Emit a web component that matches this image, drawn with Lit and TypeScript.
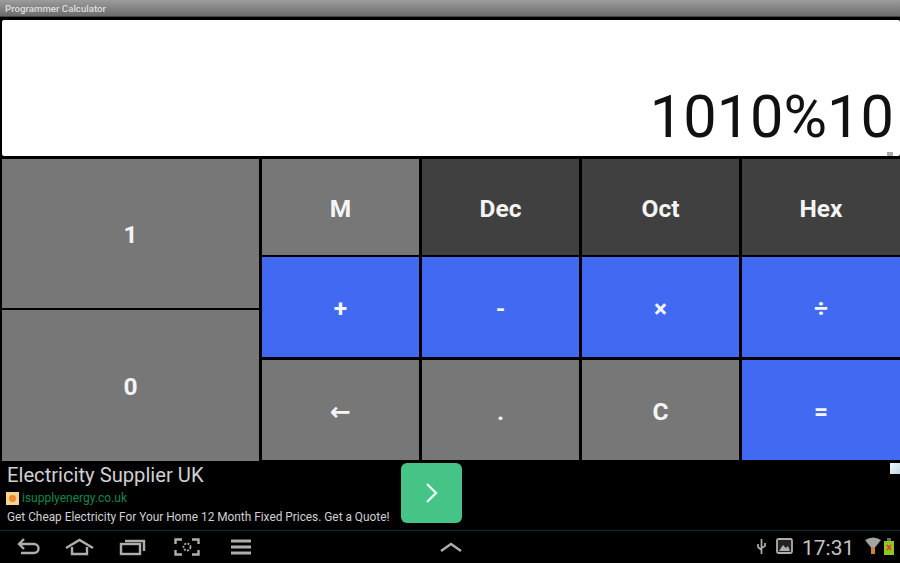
import { LitElement, html, css } from "lit";
import { customElement } from "lit/decorators.js";

const ICON = "fill:none;stroke:#aeaeae;stroke-width:2.4";

@customElement("app-root")
export class AppRoot extends LitElement {
  static styles = css`
    :host { display: block; width: 900px; height: 563px; background: #000; overflow: hidden; font-family: Roboto, "Liberation Sans", sans-serif; }
    .title { height: 17px; background: linear-gradient(#9c9c9c, #6c6c6c); color: #dedede; font-size: 9.7px; font-weight: 500; line-height: 18px; padding-left: 5px; box-sizing: border-box; border-bottom: 1px solid #444; }
    .disp { position: relative; margin: 3px 0 0 2px; height: 136px; background: #fff; border-radius: 2px; display: flex; align-items: flex-end; justify-content: flex-end; color: #111; font-size: 59.5px; line-height: 70px; padding: 0 6px 4px 0; box-sizing: border-box; }
    .grip { position: absolute; right: 7px; bottom: 0; width: 6px; height: 4px; background: #aaa; }
    .keys { display: grid; grid-template-columns: 257px 157px 157px 157px 158px; column-gap: 3px; margin: 3px 0 0 2px; height: 302px; }
    .left { display: grid; grid-template-rows: 148.5px 150.5px; row-gap: 2.5px; }
    .col { display: grid; grid-template-rows: 95.5px 100px 100px; row-gap: 2.75px; }
    .k { display: flex; align-items: center; justify-content: center; padding-top: 3px; box-sizing: border-box; color: #f4f4f4; font-size: 24.5px; font-weight: 700; }
    .g { background: #777; }
    .d { background: #404040; }
    .b { background: #4169f1; }
    .arrow { font-family: "DejaVu Sans", sans-serif; font-size: 25px; }
    .ad { position: relative; height: 69px; background: #000; }
    .ad h1 { position: absolute; margin: 0; left: 7px; top: 1px; font-size: 20.2px; font-weight: 400; color: #d0d0d0; line-height: 26px; }
    .fav { position: absolute; left: 6px; top: 31px; width: 13px; height: 13px; background: #f2d48a; }
    .fav i { display: block; margin: 3px; width: 7px; height: 7px; background: #f08a30; border-radius: 50%; }
    .url { position: absolute; left: 22px; top: 29px; font-size: 12px; line-height: 16px; color: #0e8a4a; }
    .txt { position: absolute; left: 7px; top: 48px; font-size: 11.85px; line-height: 16px; color: #d0d0d0; white-space: nowrap; }
    .go { position: absolute; left: 401px; top: 1.5px; width: 61px; height: 60px; border-radius: 6px; background: #46c488; display: flex; align-items: center; justify-content: center; }
    .tag { position: absolute; right: 0; top: 1.5px; width: 10px; height: 11px; background: linear-gradient(135deg, #eef6f8, #bcd8e6); }
    .nav { position: relative; height: 33px; border-top: 1px solid #0f2a33; box-sizing: border-box; }
    .nav svg { position: absolute; }
    .time { position: absolute; left: 802px; top: 3px; font-size: 21px; line-height: 28px; color: #c4c4c4; }
  `;

  k(label: string, c: string) {
    return html`<div class="k ${c}">${label}</div>`;
  }

  render() {
    const cols = [
      [["M", "g"], ["+", "b"], ["←", "g arrow"]],
      [["Dec", "d"], ["-", "b"], [".", "g"]],
      [["Oct", "d"], ["×", "b"], ["C", "g"]],
      [["Hex", "d"], ["÷", "b"], ["=", "b"]],
    ];
    return html`
      <div class="title">Programmer Calculator</div>
      <div class="disp">1010%10<span class="grip"></span></div>
      <div class="keys">
        <div class="left">${this.k("1", "g")}${this.k("0", "g")}</div>
        ${cols.map((c) => html`<div class="col">${c.map(([l, s]) => this.k(l, s))}</div>`)}
      </div>
      <div class="ad">
        <h1>Electricity Supplier UK</h1>
        <div class="fav"><i></i></div>
        <div class="url">isupplyenergy.co.uk</div>
        <div class="txt">Get Cheap Electricity For Your Home 12 Month Fixed Prices. Get a Quote!</div>
        <div class="go"><svg width="16" height="22" viewBox="0 0 16 22"><path d="M3 2l9 9-9 9" fill="none" stroke="#e8f8f0" stroke-width="2.4"/></svg></div>
        <div class="tag"></div>
      </div>
      <div class="nav">
        <svg style="left:16px;top:7px" width="24" height="18" viewBox="0 0 24 18"><path d="M3 6h15a4.500 4.500 0 0 1 0 9H5M8 1L3 6l5 5" style=${ICON}/></svg>
        <svg style="left:64px;top:7px" width="31" height="18" viewBox="0 0 31 18"><path d="M2 10L15.500 2 29 10M8 9v7h15V9" style=${ICON}/></svg>
        <svg style="left:119px;top:7px" width="27" height="18" viewBox="0 0 27 18"><rect x="2" y="6" width="19" height="10" style=${ICON}/><path d="M6 3h19v10" style=${ICON}/></svg>
        <svg style="left:174px;top:7px" width="26" height="18" viewBox="0 0 26 18"><path d="M1.500 6V1.500H8M18 1.500h6.500V6M24.500 12v4.500H18M8 16.500H1.500V12" style=${ICON}/><circle cx="13" cy="9" r="3.500" fill="none" stroke="#aeaeae" stroke-width="1.800" stroke-dasharray="2 1.300"/></svg>
        <svg style="left:231px;top:7px" width="20" height="18" viewBox="0 0 20 18"><path d="M0 3h20M0 9h20M0 15h20" fill="none" stroke="#aeaeae" stroke-width="2.800"/></svg>
        <svg style="left:440px;top:10px" width="22" height="12" viewBox="0 0 22 12"><path d="M1 10l10-7 10 7" style=${ICON}/></svg>
        <svg style="left:756px;top:7px" width="11" height="17" viewBox="0 0 11 17"><path d="M5.500 1v15M5.500 12L2 9V6M5.500 10L9 8V5" fill="none" stroke="#aeaeae" stroke-width="1.700"/></svg>
        <svg style="left:776px;top:7px" width="17" height="16" viewBox="0 0 17 16"><rect x="1" y="1" width="15" height="14" rx="1.500" fill="#222" stroke="#aeaeae" stroke-width="1.800"/><path d="M3 13l4-6 3 3 2-2 2 5z" fill="#aeaeae"/></svg>
        <div class="time">17:31</div>
        <svg style="left:865px;top:6px" width="16" height="18" viewBox="0 0 16 18"><path d="M0 3q8-5 16 0L8 13z" fill="#a4a4a4"/><rect x="6" y="10" width="4" height="7" fill="#c88a2a"/></svg>
        <svg style="left:884px;top:7px" width="10" height="17" viewBox="0 0 10 17"><rect x="0" y="3" width="10" height="14" fill="#8cc820"/><rect x="3" y="0" width="4" height="3" fill="#666"/><path d="M3 7l4 5M7 7l-4 5" stroke="#e33" stroke-width="1.600"/></svg>
      </div>
    `;
  }
}
